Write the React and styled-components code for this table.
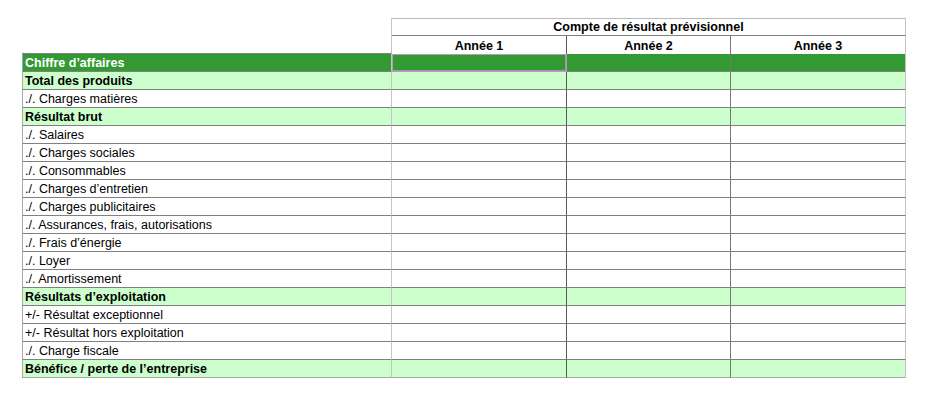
import React from "react";
import styled, { createGlobalStyle, css } from "styled-components";

const Global = createGlobalStyle`
  html, body { margin: 0; padding: 0; background: #ffffff; }
  body { font-family: "Liberation Sans", Arial, sans-serif; }
`;

const Page = styled.div`
  padding: 18px 0 0 22px;
`;

const Grid = styled.div`
  display: grid;
  grid-template-columns: 370px 175px 164px 175px;
  grid-auto-rows: 18px;
  width: max-content;
  font-size: 12.5px;
  color: #000;
`;

const colLine = ["#c4c4c4", "#5a5a5a", "#787878", "#c4c4c4"];

const bgFor = {
  dark: "#339933",
  light: "#ccffcc",
  plain: "#ffffff",
};

const Cell = styled.div`
  box-sizing: border-box;
  display: flex;
  align-items: flex-end;
  padding: 0 2px 0 2px;
  white-space: nowrap;
  overflow: hidden;
  line-height: 15px;
  background: ${(p) => bgFor[p.$variant || "plain"]};
  color: ${(p) => (p.$variant === "dark" ? "#ffffff" : "#000000")};
  font-weight: ${(p) => (p.$bold ? 700 : 400)};
  border-right: 1px solid ${(p) => colLine[p.$col]};
  border-bottom: 1px solid ${(p) => (p.$last ? "#a8a8a8" : "#808080")};
  ${(p) =>
    p.$col === 0 &&
    css`
      border-left: 1px solid #a8a8a8;
    `}
  ${(p) =>
    p.$selected &&
    css`
      outline: 1px solid #b49cbc;
      outline-offset: -1px;
      box-shadow: inset 0 0 0 1px #a890b0;
    `}
`;

const Corner = styled.div`
  box-sizing: border-box;
  border-right: 1px solid #c4c4c4;
  ${(p) =>
    p.$bottom &&
    css`
      border-bottom: 1px solid #808080;
    `}
`;

const Title = styled.div`
  grid-column: 2 / span 3;
  box-sizing: border-box;
  display: flex;
  align-items: flex-end;
  justify-content: center;
  line-height: 15px;
  font-weight: 700;
  border-top: 1px solid #b8b8b8;
  border-right: 1px solid #c4c4c4;
  border-bottom: 1px solid #808080;
`;

const YearHead = styled.div`
  box-sizing: border-box;
  display: flex;
  align-items: flex-end;
  justify-content: center;
  line-height: 15px;
  font-weight: 700;
  border-right: 1px solid ${(p) => colLine[p.$col]};
`;

const rows = [
  { label: "Chiffre d’affaires", variant: "dark", bold: true },
  { label: "Total des produits", variant: "light", bold: true },
  { label: "./. Charges matières" },
  { label: "Résultat brut", variant: "light", bold: true },
  { label: "./. Salaires" },
  { label: "./. Charges sociales" },
  { label: "./. Consommables" },
  { label: "./. Charges d’entretien" },
  { label: "./. Charges publicitaires" },
  { label: "./. Assurances, frais, autorisations" },
  { label: "./. Frais d’énergie" },
  { label: "./. Loyer" },
  { label: "./. Amortissement" },
  { label: "Résultats d’exploitation", variant: "light", bold: true },
  { label: "+/- Résultat exceptionnel" },
  { label: "+/- Résultat hors exploitation" },
  { label: "./. Charge fiscale" },
  { label: "Bénéfice / perte de l’entreprise", variant: "light", bold: true },
];

export default function App() {
  return (
    <>
      <Global />
      <Page>
        <Grid>
          <Corner />
          <Title>Compte de résultat prévisionnel</Title>
          <Corner $bottom />
          <YearHead $col={1}>Année 1</YearHead>
          <YearHead $col={2}>Année 2</YearHead>
          <YearHead $col={3}>Année 3</YearHead>
          {rows.map((r, i) => {
            const last = i === rows.length - 1;
            return (
              <React.Fragment key={r.label}>
                <Cell $col={0} $variant={r.variant} $bold={r.bold} $last={last}>
                  {r.label}
                </Cell>
                {[1, 2, 3].map((c) => (
                  <Cell
                    key={c}
                    $col={c}
                    $variant={r.variant}
                    $last={last}
                    $selected={i === 0 && c === 1}
                  />
                ))}
              </React.Fragment>
            );
          })}
        </Grid>
      </Page>
    </>
  );
}
